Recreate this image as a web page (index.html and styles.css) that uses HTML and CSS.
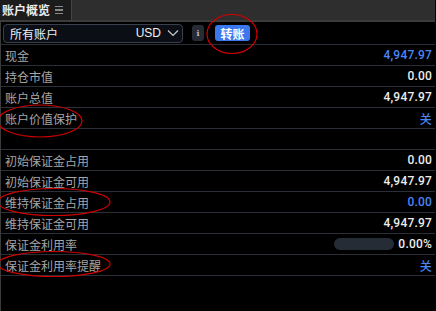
FILE: index.html
```html
<!DOCTYPE html>
<html lang="zh">
<head>
<meta charset="utf-8">
<link rel="stylesheet" href="styles.css">
</head>
<body>
<div class="panel">
  <div class="tabbar">
    <div class="tab"><span class="tab-title">账户概览</span><span class="tab-menu"><i></i><i></i><i></i></span></div>
  </div>
  <div class="toolbar">
    <div class="select"><span class="sel-label">所有账户</span><span class="sel-cur">USD<svg width="12" height="8" viewBox="0 0 12 8"><path d="M1 1.5 L6 6.5 L11 1.5" fill="none" stroke="#c8ccd4" stroke-width="1.2"/></svg></span></div>
    <div class="info-btn">i</div>
    <div class="transfer-btn">转账</div>
  </div>
  <div class="row"><span class="label">现金</span><span class="value blue">4,947.97</span></div>
  <div class="row"><span class="label">持仓市值</span><span class="value">0.00</span></div>
  <div class="row"><span class="label">账户总值</span><span class="value">4,947.97</span></div>
  <div class="row"><span class="label">账户价值保护</span><span class="value blue">关</span></div>
  <div class="row"><span class="label"></span></div>
  <div class="row"><span class="label">初始保证金占用</span><span class="value">0.00</span></div>
  <div class="row"><span class="label">初始保证金可用</span><span class="value">4,947.97</span></div>
  <div class="row"><span class="label">维持保证金占用</span><span class="value blue">0.00</span></div>
  <div class="row"><span class="label">维持保证金可用</span><span class="value">4,947.97</span></div>
  <div class="row"><span class="label">保证金利用率</span><span class="value util"><span class="bar"></span>0.00%</span></div>
  <div class="row"><span class="label">保证金利用率提醒</span><span class="value blue">关</span></div>
</div>
<svg class="marks" width="436" height="311" viewBox="0 0 436 311">
  <ellipse cx="232" cy="34" rx="25" ry="19.5" fill="none" stroke="#d00000" stroke-width="1.2"/>
  <ellipse cx="40" cy="121" rx="42" ry="16" fill="none" stroke="#d00000" stroke-width="1.2"/>
  <ellipse cx="54" cy="202" rx="56" ry="13.5" fill="none" stroke="#d00000" stroke-width="1.2"/>
  <ellipse cx="54" cy="264" rx="56" ry="12.5" fill="none" stroke="#d00000" stroke-width="1.2"/>
</svg>
</body>
</html>
```
FILE: styles.css
```css
html, body {
  margin: 0;
  padding: 0;
  background: #000;
  width: 436px;
  height: 311px;
  overflow: hidden;
  font-family: "Noto Sans CJK SC", "Noto Sans", "Liberation Sans", sans-serif;
  font-size: 12px;
}
.panel {
  width: 435px;
  height: 311px;
  border-left: 1px solid #3a3a3a;
  box-sizing: border-box;
}
.tabbar {
  height: 20px;
  background: #2e2e2e;
  border-bottom: 2px solid #3c3c3c;
  display: flex;
  margin-left: -1px;
}
.tab {
  width: 69px;
  background: #1c1c1c;
  border-right: 1px solid #444;
  display: flex;
  align-items: center;
  padding-left: 2px;
  gap: 5px;
}
.tab-title {
  color: #ececec;
  font-weight: bold;
  font-size: 12px;
  line-height: 20px;
}
.tab-menu {
  display: flex;
  flex-direction: column;
  gap: 2px;
}
.tab-menu i {
  display: block;
  width: 8px;
  height: 1.5px;
  background: #8a8a8a;
}
.toolbar {
  height: 22px;
  border-bottom: 1px solid #2a2f38;
  display: flex;
  align-items: center;
  padding-left: 2px;
}
.select {
  width: 180px;
  height: 19px;
  box-sizing: border-box;
  border: 1px solid #39404c;
  border-radius: 4px;
  background: #0b0e14;
  display: flex;
  align-items: center;
  justify-content: space-between;
  padding: 0 3px 0 6px;
  color: #eef0f4;
}
.sel-cur {
  display: flex;
  align-items: center;
  gap: 6px;
  font-family: "Liberation Sans", sans-serif;
  font-size: 12px;
}
.info-btn {
  margin-left: 9px;
  width: 12px;
  height: 16px;
  border-radius: 3px;
  background: #262b35;
  color: #b8bcc6;
  font-size: 8px;
  font-weight: bold;
  font-family: "DejaVu Serif", serif;
  display: flex;
  align-items: center;
  justify-content: center;
}
.transfer-btn {
  margin-left: 11px;
  width: 35px;
  height: 16px;
  border-radius: 3px;
  background: #3b78ee;
  color: #fff;
  font-weight: bold;
  font-size: 12px;
  display: flex;
  align-items: center;
  justify-content: center;
}
.row {
  height: 20px;
  border-bottom: 1px solid #2a2f38;
  display: flex;
  align-items: center;
  justify-content: space-between;
  padding: 0 3px 0 4px;
}
.label {
  color: #a6a6a6;
  font-size: 12px;
}
.value {
  color: #ececec;
  font-family: Roboto, "Liberation Sans", "Noto Sans CJK SC", sans-serif;
  font-size: 12px;
  font-weight: 500;
  letter-spacing: 0.2px;
}
.value.blue {
  color: #4a86f7;
}
.util {
  display: flex;
  align-items: center;
  gap: 4px;
}
.bar {
  display: block;
  width: 60px;
  height: 12px;
  border-radius: 6px;
  background: #262c36;
}
.marks {
  position: absolute;
  left: 0;
  top: 0;
  pointer-events: none;
}
```
